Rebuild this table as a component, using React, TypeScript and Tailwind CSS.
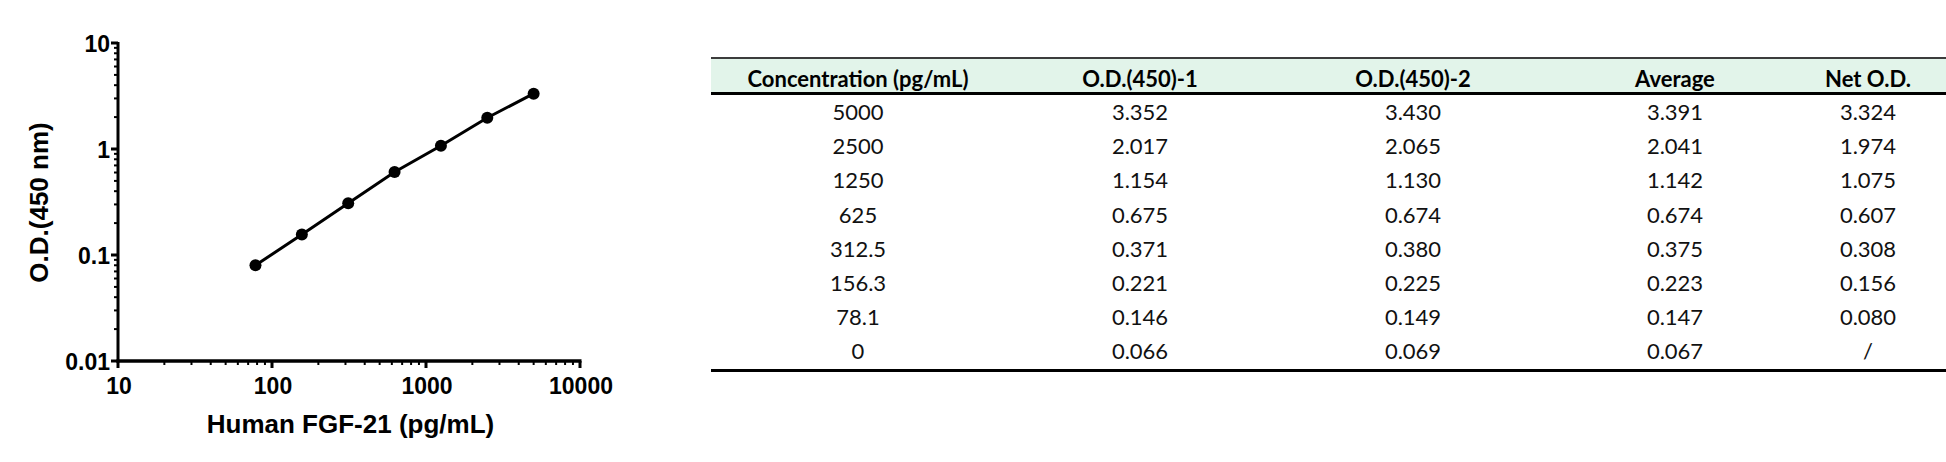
import React from "react";

const X0 = 118;
const XDEC = 154;
const Y0 = 361;
const YDEC = 106;

const xOf = (v: number) => X0 + XDEC * (Math.log10(v) - 1);
const yOf = (v: number) => Y0 - YDEC * (Math.log10(v) + 2);

const points: [number, number][] = [
  [78.1, 0.08],
  [156.3, 0.156],
  [312.5, 0.308],
  [625, 0.607],
  [1250, 1.075],
  [2500, 1.974],
  [5000, 3.324],
];

const rows = [
  ["5000", "3.352", "3.430", "3.391", "3.324"],
  ["2500", "2.017", "2.065", "2.041", "1.974"],
  ["1250", "1.154", "1.130", "1.142", "1.075"],
  ["625", "0.675", "0.674", "0.674", "0.607"],
  ["312.5", "0.371", "0.380", "0.375", "0.308"],
  ["156.3", "0.221", "0.225", "0.223", "0.156"],
  ["78.1", "0.146", "0.149", "0.147", "0.080"],
  ["0", "0.066", "0.069", "0.067", "/"],
];

const headers = ["Concentration (pg/mL)", "O.D.(450)-1", "O.D.(450)-2", "Average", "Net O.D."];

function Chart() {
  const yTicks: React.ReactNode[] = [];
  const xTicks: React.ReactNode[] = [];
  for (let d = 0; d < 3; d++) {
    for (let m = 2; m <= 9; m++) {
      const y = Y0 - YDEC * (d + Math.log10(m));
      yTicks.push(<line key={`ym${d}-${m}`} x1={X0 - 4} x2={X0} y1={y} y2={y} stroke="#000" strokeWidth={2} />);
      const x = X0 + XDEC * (d + Math.log10(m));
      xTicks.push(<line key={`xm${d}-${m}`} x1={x} x2={x} y1={Y0} y2={Y0 + 4} stroke="#000" strokeWidth={2} />);
    }
  }
  const yMajor = [
    ["10", 0],
    ["1", 1],
    ["0.1", 2],
    ["0.01", 3],
  ] as const;
  const xMajor = ["10", "100", "1000", "10000"];
  const path = points.map(([c, o], i) => `${i === 0 ? "M" : "L"}${xOf(c).toFixed(1)} ${yOf(o).toFixed(1)}`).join(" ");
  return (
    <svg width={711} height={462} className="shrink-0 font-['Liberation_Sans',Arial,sans-serif] font-bold">
      {yTicks}
      {xTicks}
      {yMajor.map(([label, i]) => {
        const y = 43 + YDEC * i;
        return (
          <g key={label}>
            <line x1={X0 - 7} x2={X0} y1={y} y2={y} stroke="#000" strokeWidth={3} />
            <text x={110} y={y + 9} textAnchor="end" fontSize={23} fill="#000">
              {label}
            </text>
          </g>
        );
      })}
      {xMajor.map((label, i) => {
        const x = X0 + XDEC * i;
        return (
          <g key={label}>
            <line x1={x} x2={x} y1={Y0} y2={Y0 + 7} stroke="#000" strokeWidth={3} />
            <text x={x + 1} y={394} textAnchor="middle" fontSize={23} fill="#000">
              {label}
            </text>
          </g>
        );
      })}
      <line x1={X0} x2={X0} y1={42} y2={Y0 + 1.5} stroke="#000" strokeWidth={3} />
      <line x1={X0 - 1.5} x2={X0 + XDEC * 3 + 1.5} y1={Y0} y2={Y0} stroke="#000" strokeWidth={3.5} />
      <path d={path} fill="none" stroke="#000" strokeWidth={3} />
      {points.map(([c, o]) => (
        <circle key={c} cx={xOf(c)} cy={yOf(o)} r={6} fill="#000" />
      ))}
      <text x={350.5} y={433} textAnchor="middle" fontSize={26} fill="#000">
        Human FGF-21 (pg/mL)
      </text>
      <text transform="translate(48 202.5) rotate(-90)" textAnchor="middle" fontSize={26} fill="#000">
        O.D.(450 nm)
      </text>
    </svg>
  );
}

function Table() {
  const cols = "grid grid-cols-[294px_270px_276px_248px_138px_1fr]";
  return (
    <div className="flex-1 pt-[57px] font-['Lato','Liberation_Sans',sans-serif]">
      <div className="border-t-2 border-[#3c3c3c]">
        <div className={`${cols} h-[33px] bg-[#e2f4ea] pt-[7px] text-[22px] font-bold leading-[26px] text-black`}>
          {headers.map((h) => (
            <div key={h} className="text-center whitespace-nowrap">
              {h}
            </div>
          ))}
          <div />
        </div>
        <div className="border-t-[3px] border-black" />
        {rows.map((r) => (
          <div key={r[0]} className={`${cols} h-[34.2px] text-[22px] leading-[34.2px] text-[#111]`}>
            {r.map((c, i) => (
              <div key={i} className="text-center whitespace-nowrap">
                {c}
              </div>
            ))}
            <div />
          </div>
        ))}
        <div className="border-t-[3px] border-black" />
      </div>
    </div>
  );
}

export default function App() {
  return (
    <div className="flex h-[462px] w-[1946px] overflow-hidden bg-white">
      <Chart />
      <Table />
    </div>
  );
}
